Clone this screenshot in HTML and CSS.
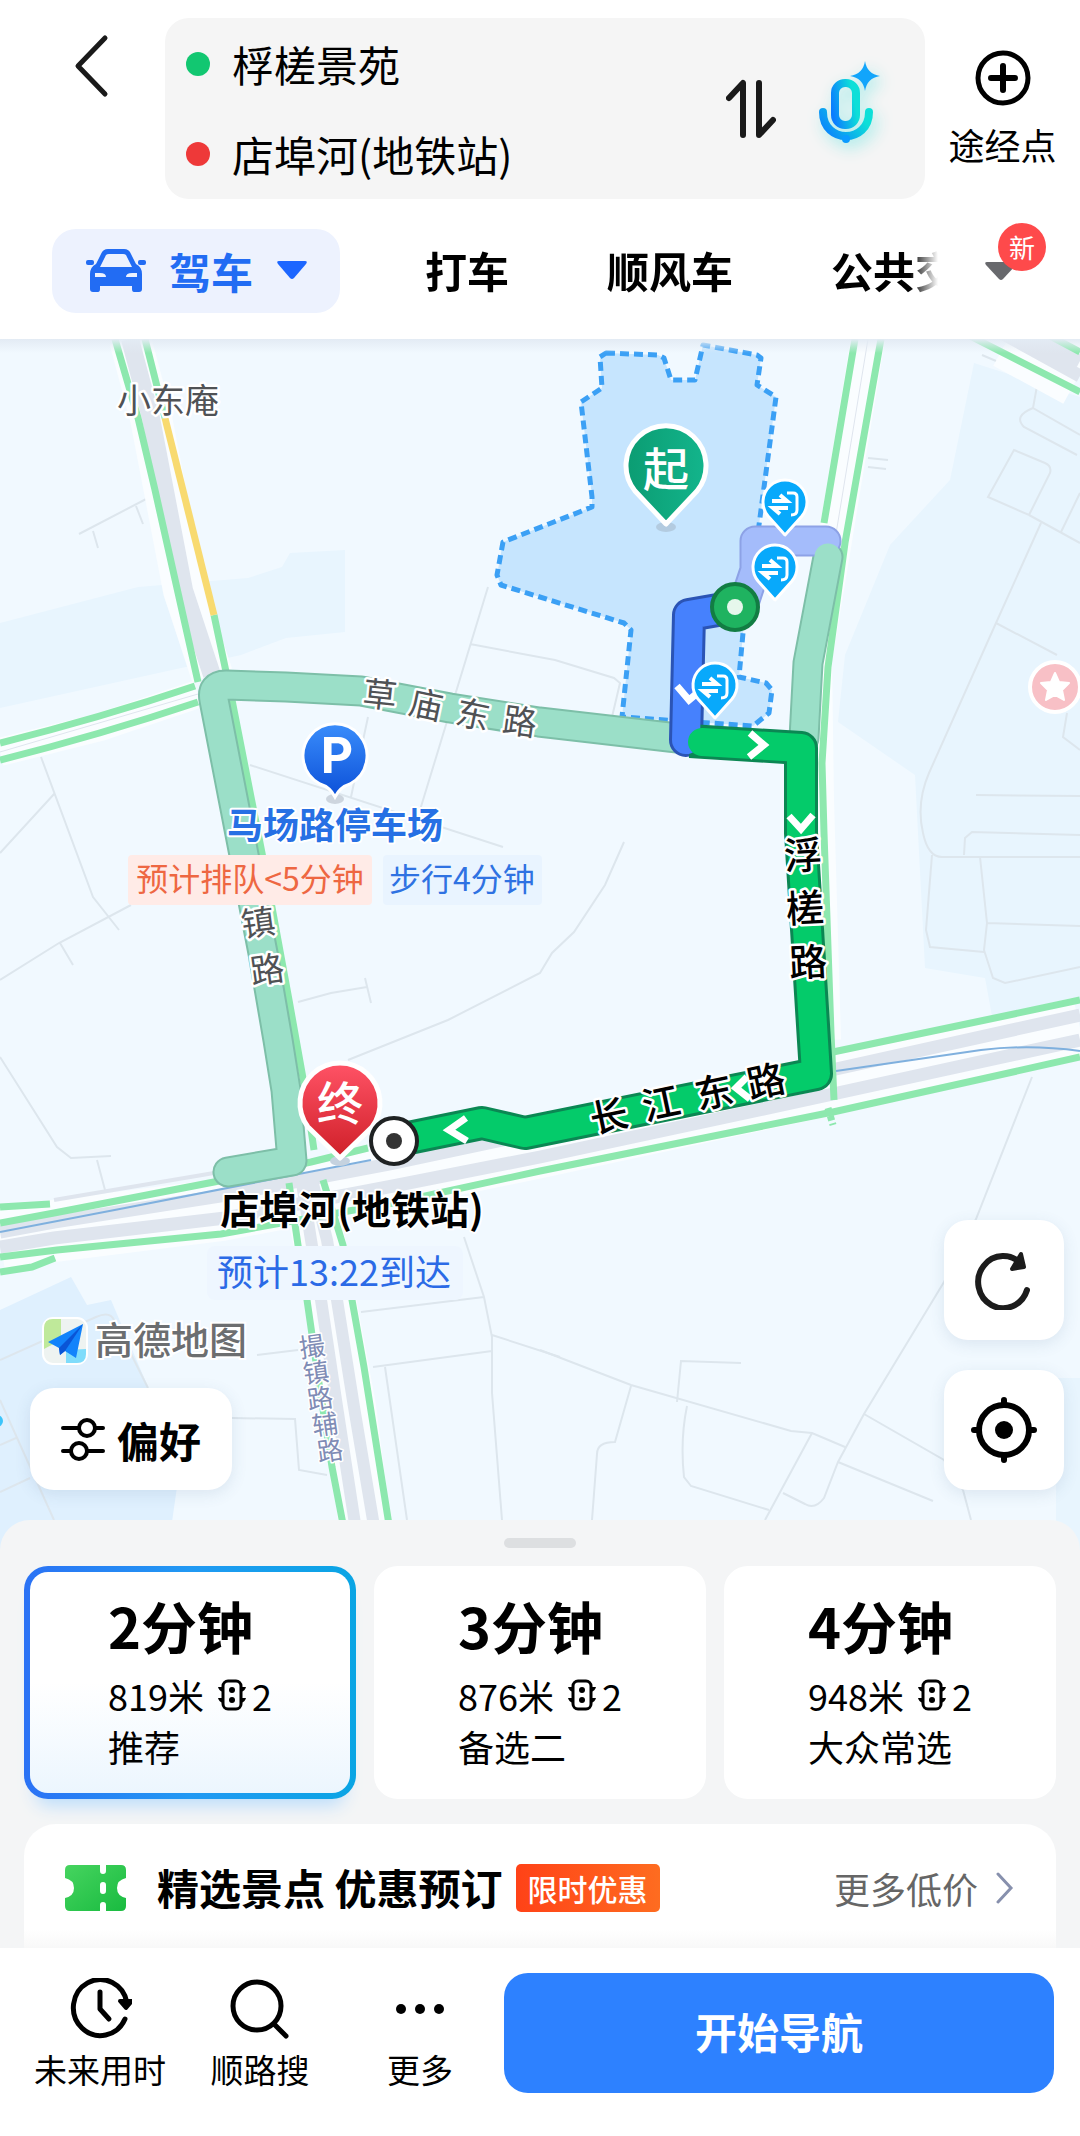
FILE: index.html
```html
<!DOCTYPE html>
<html lang="zh-CN">
<head>
  <meta charset="UTF-8" />
  <meta name="viewport" content="width=device-width, initial-scale=1.0"/>
  <title>路线规划</title>
  <link rel="stylesheet" href="styles.css">
</head>
<body>
  <header class="header">
    <div class="search">
      <button class="back" aria-label="返回">
        <svg width="36" height="64" viewBox="0 0 36 64"><path d="M31 4 4 32 31 60" fill="none" stroke="#1a1a1a" stroke-width="5" stroke-linecap="round" stroke-linejoin="round"/></svg>
      </button>
      <div class="route-box">
        <div class="fields">
          <label class="field"><span class="dot dot-start"></span><input type="text" value="桴槎景苑" aria-label="起点"></label>
          <label class="field"><span class="dot dot-end"></span><input type="text" value="店埠河(地铁站)" aria-label="终点"></label>
        </div>
        <button class="swap" aria-label="交换起终点">
          <svg width="50" height="60" viewBox="0 0 50 60"><path d="M3 19 17 4V56M33 4V56L47 41" fill="none" stroke="#1a1a1a" stroke-width="6" stroke-linecap="round" stroke-linejoin="round"/></svg>
        </button>
        <button class="mic" aria-label="语音输入">
          <svg width="62" height="84" viewBox="0 0 62 84">
            <defs>
              <linearGradient id="micFill" x1="0" y1="1" x2="1" y2="0.6"><stop offset="0" stop-color="#0b7cff"/><stop offset="1" stop-color="#0ddfd8"/></linearGradient>
            </defs>
            <rect x="16" y="23" width="21" height="42" rx="10" fill="none" stroke="url(#micFill)" stroke-width="8"/>
            <path d="M4 52C4 84 50 84 50 52" fill="none" stroke="url(#micFill)" stroke-width="8" stroke-linecap="round"/>
            <circle cx="27" cy="79" r="4" fill="#0b9bff"/>
            <path d="M46 1Q48 14 61 16Q48 18 46 31Q44 18 31 16Q44 14 46 1Z" fill="#12a5fb"/>
          </svg>
        </button>
      </div>
      <button class="waypoint">
        <svg width="58" height="58" viewBox="0 0 58 58"><g fill="none" stroke="#000" stroke-linecap="round"><circle cx="29" cy="29" r="25" stroke-width="5"/><path d="M29 17V41M17 29H41" stroke-width="6"/></g></svg>
        <span>途经点</span>
      </button>
    </div>
    <nav class="modes">
      <div class="tabs">
        <button class="tab active">
          <svg width="60" height="44" viewBox="0 0 60 44">
            <path d="M10 16 15 6Q17 1 22 1H38Q43 1 45 6L50 16Q56 19 56 26V41Q56 44 53 44H48Q46 44 46 41V38H14V41Q14 44 12 44H7Q4 44 4 41V26Q4 19 10 16ZM20 7 14 19H46L40 7Q39 6 37 6H23Q21 6 20 7ZM9 25V29H20Q20 25 14 25ZM51 25H46Q40 25 40 29H51Z" fill="#226cf3" fill-rule="evenodd"/>
            <rect x="0" y="12" width="8" height="5" rx="2" fill="#226cf3"/><rect x="52" y="12" width="8" height="5" rx="2" fill="#226cf3"/>
          </svg>
          <span>驾车</span>
          <svg width="32" height="20" viewBox="0 0 32 20"><path d="M3 1H29Q32 1 30 4L18 18Q16 20 14 18L2 4Q0 1 3 1Z" fill="#1c66ff"/></svg>
        </button>
        <button class="tab">打车</button>
        <button class="tab">顺风车</button>
        <button class="tab">公共交通</button>
      </div>
      <button class="more-modes" aria-label="更多出行方式">
        <svg width="34" height="20" viewBox="0 0 34 20"><path d="M3 1H31Q34 1 32 4L19 18Q17 20 15 18L2 4Q0 1 3 1Z" fill="#68696d"/></svg>
        <span class="badge">新</span>
      </button>
    </nav>
  </header>

  <main class="map">
    <svg class="map-canvas" viewBox="0 339 1080 1211" preserveAspectRatio="xMidYMid slice">
      <defs>
        <linearGradient id="topShade" x1="0" y1="0" x2="0" y2="1"><stop offset="0" stop-color="#e3ebf4"/><stop offset="1" stop-color="#e3ebf4" stop-opacity="0"/></linearGradient>
        <linearGradient id="redPin" x1="0" y1="0" x2="0" y2="1"><stop offset="0" stop-color="#ff5366"/><stop offset="1" stop-color="#cf1f28"/></linearGradient>
        <linearGradient id="greenPin" x1="0" y1="0" x2="1" y2="0"><stop offset="0" stop-color="#0b9c72"/><stop offset="1" stop-color="#13b58c"/></linearGradient>
        <linearGradient id="bluePin" x1="0" y1="0" x2="0" y2="1"><stop offset="0" stop-color="#3a8dfb"/><stop offset="1" stop-color="#0c50d8"/></linearGradient>
        <g id="gate">
          <path d="M0 31 -17 12A22 22 0 1 1 17 12Z" fill="#08a9fb" stroke="#fff" stroke-width="3" stroke-linejoin="round"/>
          <path d="M-13-3H2L-5-9M3 4H-12L-5 10" fill="none" stroke="#fff" stroke-width="4"/>
          <path d="M2-11H8Q12-11 12-7V6Q12 11 6 11" fill="none" stroke="#fff" stroke-width="3" stroke-linejoin="round"/>
        </g>
      </defs>
      <rect y="339" width="1080" height="1211" fill="#f1f9ff"/>

      <!-- land areas -->
      <g fill="#e8f5fe">
        <path d="M0 623 138 587 248 578 282 567 290 553 345 550V632L286 638 241 655 172 670 0 708Z"/>
        <path d="M974 363 1080 397V1002L992 1016 985 978 925 968 915 775 838 722 845 655 890 545 950 480Z"/>
        <path d="M1056 1378H1080V1550H1056Z"/>
      </g>
      <path d="M0 1310 71 1277 87 1305 111 1300 148 1387 178 1480 168 1550H0Z" fill="#dff0fe"/>

      <!-- lanes -->
      <g class="lane">
        <path d="M79 534 150 497M136 506 143 524M93 531 98 548M488 587 420 810M470 644 555 660 614 678 620 683 612 717"/>
        <path d="M368 717 351 797M250 765 503 847M41 757 93 897 119 930M55 793 0 853M0 980 59 943 131 905M60 943 73 965"/>
        <path d="M0 1057 57 1147 71 1158 111 1156M97 1160 105 1190M298 1002 331 993 367 987M365 978 371 1003"/>
        <path d="M348 1060 448 1020 540 973 552 953 574 932 605 885 624 842"/>
        <path d="M982 355 1029 375Q1039 378 1037 386L1033 408 1080 435M1033 408Q1013 416 1024 427L1077 455"/>
        <path d="M1014 450 1045 463Q1052 466 1050 473L1029 515 988 497ZM1029 515 1080 543M1061 532 1080 493M1041 523 996 623 929 773Q916 803 923 833 928 857 942 857L1080 857M996 623 1057 655M1067 713 1063 737 1080 750"/>
        <path d="M976 795 1080 796M964 855 965 838 972 832 1080 835M932 855 926 930 930 947 984 952M980 857 987 923 984 950 993 978 1005 983 1080 967M987 923 1080 926"/>
        <path d="M1032 1077 976 1219 944 1282 864 1414 838 1462 824 1498Q815 1510 805 1504L783 1493M540 1350 631 1385 791 1431 812 1433 845 1447M812 1433 765 1520M864 1414 944 1460 963 1490 971 1520M838 1462 933 1501"/>
        <path d="M631 1386 615 1442Q597 1442 597 1454L592 1520M677 1402 681 1361 741 1363M687 1406Q680 1440 684 1477L691 1486 769 1510"/>
        <path d="M464 1237 484 1297 492 1337 492 1393 502 1520M361 1312 484 1297M373 1367 492 1351M492 1335 560 1357M385 1367 407 1520M232 1418 295 1419 299 1470 327 1475M257 1355 298 1350"/>
        <path d="M0 1360 96 1317Q110 1311 114 1320L148 1388M0 1400 54 1520M0 1445 16 1438M0 1492 30 1478M711 458 729 460M868 458 888 460M868 467 886 469"/>
      </g>

      <!-- big roads -->
      <g class="casing">
        <path d="M130 339 151 418 184 590 212 675" stroke-width="42"/>
        <path d="M0 752 100 727 198 694" stroke-width="28"/>
        <path d="M868 339 835 540 815 660 817 800 824 1040" stroke-width="34"/>
        <path d="M1010 335 1080 373" stroke-width="70"/>
        <path d="M1080 1028 836 1083 540 1147 390 1178 220 1210 54 1231 0 1240" stroke-width="62"/>
        <path d="M306 1180 320 1245 331 1305 350 1407 368 1550" stroke-width="52"/>
      </g>
      <g class="asphalt">
        <path d="M130 339 151 418 184 590 212 675" stroke-width="18"/>
        <path d="M1000 332 1080 376M1025 332 1080 361" stroke-width="13"/>
        <path d="M1080 1015 836 1069 540 1132 390 1164 220 1196 54 1222 0 1232M1080 1040 833 1094 540 1157 393 1186 225 1218 54 1238 0 1247" stroke-width="13"/>
        <path d="M302 1183 311 1240 321 1300 336 1400 359 1550M312 1180 327 1240 337 1300 354 1407 378 1550" stroke-width="12"/>
        <path d="M54 1200 214 1173" stroke-width="4"/>
        <path d="M0 752 198 694M868 339 835 540" stroke-width="1"/>
      </g>
      <g class="traffic">
        <path d="M115 339 138 418 155 490 198 682M145 339 165 418M214 615 232 700 262 853 289 1000 306 1095 314 1150"/>
        <path d="M165 418 214 615" stroke="#f8da70"/>
        <path d="M0 743Q100 718 195 686M0 760Q100 735 198 702"/>
        <path d="M855 339 824 523M881 339 845 543 828 667 822 763 824 833 831 1033 834 1100"/>
        <path d="M970 336 1080 392M1050 336 1080 352"/>
        <path d="M833 1052 1080 1000M1080 1057 833 1112 540 1171 393 1203 221 1234 57 1250 0 1257M368 1148 311 1162 214 1182 54 1213 0 1223"/>
        <path d="M0 1207 50 1204M0 1272 32 1267 55 1258"/>
        <path d="M289 1183 298 1245 307 1300 320 1390 332 1467 348 1550M323 1180 343 1245 352 1300 364 1367 393 1550"/>
        <path d="M828 1108 833 1125" stroke-dasharray="5 3"/>
      </g>
      <path d="M0 1232 125 1208 304 1173 371 1160M836 1071 981 1050Q1030 1044 1080 1051" fill="none" stroke="#7fb0de" stroke-width="2"/>

      <!-- residential area of the start point -->
      <path d="M606 353 658 355 664 358 671 380H695L703 345 757 355 761 358 757 385 776 397 759 525 743 633 739 677 766 683 772 690 769 713 753 726 622 717 631 630 624 623 501 585 497 575 503 542 592 507V497L581 402 602 388 600 357Z" fill="#c6e5fe" stroke="#3ba0f5" stroke-width="5" stroke-dasharray="9 5" stroke-linejoin="round"/>

      <!-- alternative routes -->
      <g class="route">
        <path d="M804 738 808 663 828 557" stroke="#7dbfa8" stroke-width="31"/>
        <path d="M745 600 755 570V541H826" stroke="#8da2e6" stroke-width="31"/>
        <path d="M745 600 755 570V541H826" stroke="#a4bcfb" stroke-width="27"/>
        <path d="M804 738 808 663 828 557" stroke="#9bdfc8" stroke-width="27"/>
        <path d="M228 1172 292 1161 286 1090 278 1040 263 953 214 700Q211 685 226 685L286 687 361 691 450 708 539 722 686 739" stroke="#7dbfa8" stroke-width="31"/>
        <path d="M228 1172 292 1161 286 1090 278 1040 263 953 214 700Q211 685 226 685L286 687 361 691 450 708 539 722 686 739" stroke="#9bdfc8" stroke-width="27"/>
      </g>

      <!-- selected route -->
      <g class="route">
        <path d="M735 607 689 615 686 740" stroke="#2b54b5" stroke-width="34"/>
        <path d="M690 741 801 748V833L815 1057 816 1074 525 1133 482 1123 394 1141" stroke="#0b8753" stroke-width="34" stroke-linecap="butt"/>
        <path d="M735 607 689 615 686 740" stroke="#4681fd" stroke-width="28"/>
        <path d="M702 742 801 748V833L815 1057 816 1074 525 1133 482 1123 394 1141" stroke="#04cb6a" stroke-width="28"/>
      </g>
      <path d="M750 733 764 745 749 757M789 816 801 829 813 815M747 1077 736 1088 750 1099M466 1118 449 1130 467 1141M677 686 689 700 701 690" fill="none" stroke="#fff" stroke-width="7"/>

      <circle cx="735" cy="607" r="23" fill="#1fb360" stroke="#127d43" stroke-width="4"/>
      <circle cx="735" cy="607" r="8" fill="#e6f7ec"/>
      <use href="#gate" x="785" y="504"/>
      <use href="#gate" x="775" y="569"/>
      <use href="#gate" x="715" y="687"/>

      <circle cx="1055" cy="687" r="25" fill="#f8c0c6" stroke="#fff" stroke-width="4"/>
      <path d="M1055 673 1059 682 1069 683 1062 690 1064 700 1055 695 1046 700 1048 690 1041 683 1051 682Z" fill="#fff" stroke="#fff" stroke-width="2" stroke-linejoin="round"/>
      <circle cx="-3" cy="1421" r="6" fill="#3cc4fa"/>

      <!-- road names -->
      <g class="road-name">
        <text x="168" y="413">小东庵</text>
        <text transform="translate(380 694) rotate(6)" y="13">草</text>
        <text transform="translate(426 704) rotate(12)" y="13">庙</text>
        <text transform="translate(473 714) rotate(12)" y="13">东</text>
        <text transform="translate(520 721) rotate(8)" y="13">路</text>
        <text transform="translate(258 922) rotate(-8)" y="13">镇</text>
        <text transform="translate(267 969) rotate(-8)" y="13">路</text>
      </g>
      <g class="road-name main-road">
        <text transform="translate(803 855) rotate(-3)" y="14">浮</text>
        <text transform="translate(805 908) rotate(-3)" y="14">槎</text>
        <text transform="translate(808 962) rotate(-3)" y="14">路</text>
        <text transform="translate(609 1116) rotate(-12)" y="14">长</text>
        <text transform="translate(661 1103) rotate(-12)" y="14">江</text>
        <text transform="translate(714 1092) rotate(-12)" y="14">东</text>
        <text transform="translate(766 1081) rotate(-12)" y="14">路</text>
      </g>
      <g class="road-name side-road">
        <text transform="translate(312 1347) rotate(-8)" y="9">撮</text>
        <text transform="translate(316 1373) rotate(-8)" y="9">镇</text>
        <text transform="translate(320 1399) rotate(-8)" y="9">路</text>
        <text transform="translate(325 1425) rotate(-8)" y="9">辅</text>
        <text transform="translate(330 1451) rotate(-8)" y="9">路</text>
      </g>

      <!-- parking -->
      <ellipse cx="335" cy="799" rx="9" ry="5" fill="#cdd5de"/>
      <path d="M335 797Q330 787 320 784A32 32 0 1 1 350 784Q340 787 335 797Z" fill="url(#bluePin)" stroke="#fff" stroke-width="3"/>
      <text class="pin-text parking-letter" x="337" y="773">P</text>
      <text class="poi-name" x="335" y="839">马场路停车场</text>
      <rect x="128" y="855" width="244" height="50" rx="4" fill="#ffebe7"/>
      <text class="poi-tag" x="250" y="891" fill="#ee6742">预计排队&lt;5分钟</text>
      <rect x="383" y="855" width="159" height="50" rx="4" fill="#e9f4ff"/>
      <text class="poi-tag" x="462" y="891" fill="#2f72e2">步行4分钟</text>

      <!-- start and end -->
      <ellipse cx="666" cy="527" rx="10" ry="5" fill="#b3cbe0"/>
      <path d="M666 524 635 491A40 40 0 1 1 697 491Z" fill="url(#greenPin)" stroke="#fff" stroke-width="5" stroke-linejoin="round"/>
      <text class="pin-text" x="666" y="486">起</text>
      <ellipse cx="340" cy="1161" rx="10" ry="5" fill="#c5d2df"/>
      <path d="M340 1158 308 1127A40 40 0 1 1 372 1127Z" fill="url(#redPin)" stroke="#fff" stroke-width="5" stroke-linejoin="round"/>
      <text class="pin-text" x="340" y="1120">终</text>
      <circle cx="394" cy="1141" r="23" fill="#fff" stroke="#1f2223" stroke-width="4"/>
      <circle cx="394" cy="1141" r="8" fill="#333"/>
      <text class="poi-name destination" x="352" y="1224">店埠河(地铁站)</text>
      <rect x="207" y="1246" width="256" height="54" rx="8" fill="#eef6ff"/>
      <text class="poi-tag eta" x="334" y="1286" fill="#2b6ae6">预计13:22到达</text>

      <!-- map brand -->
      <rect x="43" y="1318" width="44" height="46" rx="10" fill="#eef3f1" stroke="#fff" stroke-width="2"/>
      <path d="M53 1319H61V1340L44 1349V1328Q44 1319 53 1319Z" fill="#bfe99a"/>
      <path d="M66 1363V1350L86 1349V1354Q86 1363 77 1363Z" fill="#7fdcfb"/>
      <path d="M83 1324 48 1342 59 1348 60 1355 65 1351 76 1358Z" fill="#1283fb"/>
      <path d="M83 1324 59 1348 60 1355 65 1351Z" fill="#0a55d6"/>
      <text class="brand" x="171" y="1354">高德地图</text>

      <rect y="339" width="1080" height="14" fill="url(#topShade)"/>
    </svg>

    <button class="prefer">
      <svg width="44" height="44" viewBox="0 0 44 44"><g fill="none" stroke="#000" stroke-width="4" stroke-linecap="round"><path d="M2 11H18M35 11H42M2 34H10M27 34H42"/><circle cx="26" cy="11" r="8"/><circle cx="18" cy="34" r="8"/></g></svg>
      <span>偏好</span>
    </button>
    <div class="map-tools">
      <button class="tool" aria-label="刷新路线">
        <svg width="58" height="60" viewBox="0 0 58 60"><g fill="none" stroke="#1c1c1c" stroke-width="6" stroke-linecap="round" stroke-linejoin="round"><path d="M52 40A25 26 0 1 1 47 15"/><path d="M46 4 49 17 37 19Z" fill="#1c1c1c" stroke-width="4"/></g></svg>
      </button>
      <button class="tool" aria-label="定位">
        <svg width="68" height="68" viewBox="0 0 68 68"><g fill="none" stroke="#000" stroke-width="6" stroke-linecap="round"><circle cx="34" cy="34" r="25"/><path d="M34 4V9M34 59V64M4 34H9M59 34H64"/></g><circle cx="34" cy="34" r="9"/></svg>
      </button>
    </div>
  </main>

  <section class="sheet">
    <div class="handle"></div>
    <div class="plans">
      <button class="plan selected">
        <span class="plan-body">
          <strong>2分钟</strong>
          <span class="distance">819米 <svg width="28" height="32" viewBox="0 0 28 32"><use href="#light"/></svg>2</span>
          <span class="plan-label">推荐</span>
        </span>
      </button>
      <button class="plan">
        <span class="plan-body">
          <strong>3分钟</strong>
          <span class="distance">876米 <svg width="28" height="32" viewBox="0 0 28 32"><use href="#light"/></svg>2</span>
          <span class="plan-label">备选二</span>
        </span>
      </button>
      <button class="plan">
        <span class="plan-body">
          <strong>4分钟</strong>
          <span class="distance">948米 <svg width="28" height="32" viewBox="0 0 28 32"><use href="#light"/></svg>2</span>
          <span class="plan-label">大众常选</span>
        </span>
      </button>
    </div>
    <a class="promo" href="#">
      <svg width="62" height="46" viewBox="0 0 62 46">
        <defs><linearGradient id="ticket" x1="0" y1="0" x2="1" y2="1"><stop offset="0" stop-color="#46d45f"/><stop offset="1" stop-color="#19bb40"/></linearGradient></defs>
        <path d="M5 0H35V6Q35 9 38 9Q41 9 41 6V0H56Q61 0 61 5V13Q52 15 52 23Q52 31 61 33V41Q61 46 56 46H41V40Q41 37 38 37Q35 37 35 40V46H5Q0 46 0 41V33Q9 31 9 23Q9 15 0 13V5Q0 0 5 0ZM38 17Q35 17 35 20V26Q35 29 38 29Q41 29 41 26V20Q41 17 38 17Z" fill="url(#ticket)" fill-rule="evenodd"/>
      </svg>
      <span class="promo-title">精选景点 优惠预订</span>
      <span class="promo-tag">限时优惠</span>
      <span class="promo-more">更多低价</span>
      <svg width="18" height="32" viewBox="0 0 18 32"><path d="M2 2 15 16 2 30" fill="none" stroke="#8790ad" stroke-width="3" stroke-linecap="round"/></svg>
    </a>
  </section>

  <footer class="bottom-bar">
    <button class="action">
      <svg width="64" height="62" viewBox="-3 0 64 62"><g fill="none" stroke="#000" stroke-width="5" stroke-linecap="round" stroke-linejoin="round"><path d="M54 41A27 28 0 1 1 56 25"/><path d="M49 23 55 30 61 23Z" fill="#000" stroke-width="4"/><path d="M29 14V31L38 41"/></g></svg>
      <span>未来用时</span>
    </button>
    <button class="action">
      <svg width="64" height="62" viewBox="0 0 64 62"><g fill="none" stroke="#000" stroke-width="5" stroke-linecap="round"><circle cx="29" cy="28" r="24"/><path d="M47 47 58 58"/></g></svg>
      <span>顺路搜</span>
    </button>
    <button class="action">
      <svg width="64" height="62" viewBox="0 0 64 62"><circle cx="13" cy="31" r="5"/><circle cx="32" cy="31" r="5"/><circle cx="51" cy="31" r="5"/></svg>
      <span>更多</span>
    </button>
    <button class="start">开始导航</button>
  </footer>

  <svg class="symbols" aria-hidden="true">
    <g id="light">
      <rect x="5" y="2" width="18" height="28" rx="5" fill="none" stroke="#000" stroke-width="3"/>
      <path d="M0 8H5V13Q1 12 0 8ZM28 8H23V13Q27 12 28 8ZM0 19H5V24Q1 23 0 19ZM28 19H23V24Q27 23 28 19Z"/>
      <circle cx="14" cy="11" r="3"/><circle cx="14" cy="21" r="3"/>
    </g>
  </svg>
</body>
</html>
```
FILE: styles.css
```css
* {
  box-sizing: border-box;
}
body {
  margin: 0;
  min-height: 100vh;
  display: flex;
  flex-direction: column;
  font-family: "Noto Sans CJK SC", "Noto Sans", sans-serif;
  background: #fff;
  color: #000;
}
button, input {
  font: inherit;
  color: inherit;
  border: none;
  background: none;
  padding: 0;
}
button {
  cursor: pointer;
}
svg {
  display: block;
  flex: none;
}

/* header */
.header {
  padding-top: 18px;
}
.search {
  display: flex;
}
.back {
  width: 165px;
  padding: 16px 0 0 74px;
  display: flex;
  align-items: flex-start;
}
.route-box {
  flex: 1;
  min-width: 0;
  height: 181px;
  padding: 0 44px 0 21px;
  display: flex;
  align-items: center;
  background: #f5f5f5;
  border-radius: 24px;
}
.fields {
  flex: 1;
  min-width: 0;
}
.field {
  display: flex;
  align-items: center;
  height: 90px;
  gap: 22px;
}
.field input {
  flex: 1;
  min-width: 0;
  font-size: 42px;
  line-height: 60px;
}
.dot {
  width: 24px;
  height: 24px;
  border-radius: 50%;
}
.dot-start {
  background: #12c771;
}
.dot-end {
  background: #ee3939;
}
.mic {
  margin: 0 0 14px 43px;
  filter: drop-shadow(4px 6px 8px #a5ebe9);
}
.waypoint {
  width: 155px;
  padding-top: 31px;
  display: flex;
  flex-direction: column;
  align-items: center;
  justify-content: flex-start;
  gap: 11px;
  font-size: 36px;
  line-height: 52px;
}
.modes {
  display: flex;
  height: 140px;
  padding-top: 4px;
  align-items: center;
}
.tabs {
  flex: 1;
  min-width: 0;
  display: flex;
  gap: 98px;
  padding-left: 52px;
  overflow: hidden;
  -webkit-mask-image: linear-gradient(to left, transparent, #000 28px);
  mask-image: linear-gradient(to left, transparent, #000 28px);
}
.tab {
  flex: none;
  height: 84px;
  padding-bottom: 4px;
  font-size: 42px;
  font-weight: 700;
  white-space: nowrap;
}
.tab.active {
  width: 288px;
  margin-right: -13px;
  padding: 0 0 2px 2px;
  display: flex;
  align-items: center;
  justify-content: center;
  gap: 23px;
  color: #226cf3;
  background: #edf2fe;
  border-radius: 24px;
}
.more-modes {
  position: relative;
  width: 142px;
  height: 84px;
  padding-left: 46px;
}
.badge {
  position: absolute;
  left: 60px;
  top: -6px;
  width: 48px;
  height: 48px;
  border-radius: 50%;
  background: #fe4a4b;
  color: #fff;
  font-size: 26px;
  line-height: 48px;
}

/* map */
.map {
  position: relative;
  flex: 1;
  min-height: 600px;
  background: #f1f9ff;
}
.map-canvas {
  position: absolute;
  width: 100%;
  height: 100%;
}
.lane {
  fill: none;
  stroke: #dde6ed;
  stroke-width: 2;
}
.casing {
  fill: none;
  stroke: #fafdff;
}
.asphalt {
  fill: none;
  stroke: #dfe5ee;
}
.traffic {
  fill: none;
  stroke: #8de8ae;
  stroke-width: 7;
}
.route {
  fill: none;
  stroke-linecap: round;
  stroke-linejoin: round;
}
.map-canvas text {
  text-anchor: middle;
}
.road-name {
  font-size: 34px;
  fill: #505255;
  stroke: #fff;
  stroke-width: 5px;
  stroke-linejoin: round;
  paint-order: stroke;
}
.main-road {
  font-size: 38px;
  font-weight: 500;
  fill: #000;
}
.side-road {
  font-size: 26px;
  fill: #7f8cb5;
  stroke-width: 3px;
}
.pin-text {
  font-size: 46px;
  font-weight: 500;
  fill: #fff;
}
.parking-letter {
  font-family: Inter, sans-serif;
  font-size: 50px;
  font-weight: 700;
}
.poi-name {
  font-size: 36px;
  font-weight: 700;
  fill: #2670e4;
  stroke: #fff;
  stroke-width: 4px;
  stroke-linejoin: round;
  paint-order: stroke;
}
.destination {
  font-size: 39px;
  fill: #000;
}
.poi-tag {
  font-size: 32px;
}
.eta {
  font-size: 36px;
}
.brand {
  font-size: 38px;
  font-weight: 500;
  fill: #6c6e70;
  stroke: #fff;
  stroke-width: 4px;
  paint-order: stroke;
}
.prefer {
  position: absolute;
  left: 30px;
  bottom: 60px;
  width: 202px;
  height: 102px;
  display: flex;
  align-items: center;
  justify-content: center;
  gap: 12px;
  font-size: 42px;
  font-weight: 700;
}
.map-tools {
  position: absolute;
  right: 16px;
  bottom: 60px;
  display: flex;
  flex-direction: column;
  gap: 30px;
}
.tool {
  width: 120px;
  height: 120px;
  display: flex;
  align-items: center;
  justify-content: center;
}
.prefer, .tool {
  background: #fff;
  border-radius: 24px;
  box-shadow: 0 4px 16px rgba(60, 90, 130, 0.12);
}

/* route plans */
.sheet {
  position: relative;
  margin-top: -30px;
  padding: 18px 24px 0;
  background: #f4f5f6;
  border-radius: 30px 30px 0 0;
}
.handle {
  width: 72px;
  height: 10px;
  margin: 0 auto 18px;
  border-radius: 5px;
  background: #dddfe1;
}
.plans {
  display: flex;
  gap: 18px;
}
.plan {
  flex: 1;
  height: 233px;
  padding-bottom: 2px;
  display: flex;
  align-items: center;
  justify-content: center;
  text-align: left;
  background: #fff;
  border: 6px solid #fff;
  border-radius: 24px;
}
.plan.selected {
  border-color: transparent;
  background: linear-gradient(#fff 50%, #ecf6fe) padding-box, linear-gradient(to right, #2b72f5, #2199f3 50%, #0aa5e4) border-box;
  box-shadow: 0 18px 18px -12px #b9dcfb;
}
.plan-body {
  display: flex;
  flex-direction: column;
}
.plan strong {
  margin-bottom: 12px;
  font-size: 56px;
  line-height: 64px;
  font-weight: 700;
}
.distance {
  display: flex;
  align-items: center;
  gap: 6px;
  font-size: 36px;
  line-height: 52px;
  white-space: pre;
}
.plan-label {
  font-size: 36px;
  line-height: 50px;
}
.promo {
  display: flex;
  align-items: center;
  height: 124px;
  margin-top: 25px;
  padding: 4px 42px 0 41px;
  border-radius: 32px 32px 0 0;
  background: linear-gradient(#fff 85%, #f8f8f8);
  color: #000;
  text-decoration: none;
}
.promo-title {
  margin-left: 30px;
  font-size: 42px;
  line-height: 60px;
  padding-bottom: 2px;
  font-weight: 700;
}
.promo-tag {
  margin-left: 13px;
  padding: 0 12px;
  border-radius: 5px;
  background: linear-gradient(to right, #ff4217, #fe6c20);
  color: #fff;
  font-size: 30px;
  font-weight: 500;
  line-height: 48px;
}
.promo-more {
  margin-left: auto;
  margin-right: 18px;
  font-size: 36px;
  color: #666;
}

/* bottom bar */
.bottom-bar {
  display: flex;
  align-items: flex-start;
  padding: 25px 26px 43px 20px;
  background: #fff;
}
.action {
  width: 160px;
  padding-top: 5px;
  display: flex;
  flex-direction: column;
  align-items: center;
  gap: 5px;
  font-size: 33px;
  line-height: 48px;
}
.start {
  flex: 1;
  height: 120px;
  margin-left: 4px;
  padding-bottom: 6px;
  border-radius: 24px;
  background: #2d81ff;
  color: #fff;
  font-size: 42px;
  font-weight: 700;
}
.symbols {
  position: absolute;
  width: 0;
  height: 0;
}
```
